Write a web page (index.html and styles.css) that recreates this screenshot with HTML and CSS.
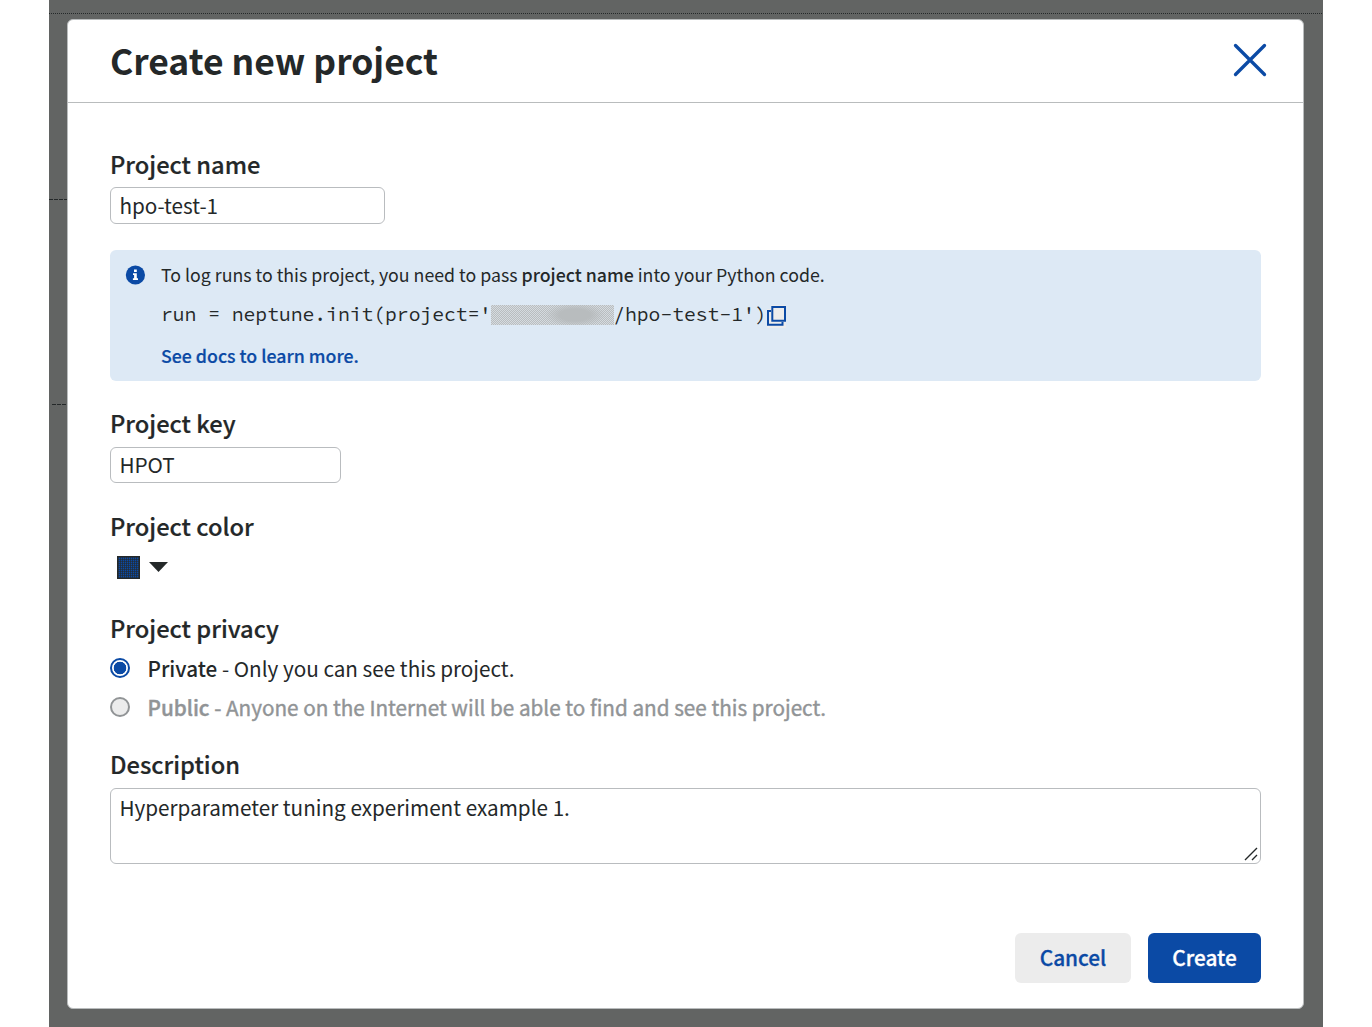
FILE: index.html
```html
<!DOCTYPE html>
<html lang="en">
<head>
<meta charset="utf-8">
<title>Create new project</title>
<link rel="stylesheet" href="styles.css">
</head>
<body>
<div class="backdrop">
  <div class="rule rule-top"></div>
  <div class="rule rule-upper"></div>
  <div class="rule rule-lower"></div>
  <main class="modal">
    <header class="modal-header">
      <h1>Create new project</h1>
      <svg class="close" width="34" height="34" viewBox="0 0 34 34" aria-label="Close"><path d="M2.5 2.5 31.5 31.5M31.5 2.5 2.5 31.5"/></svg>
    </header>
    <form class="modal-body">
      <label class="label" for="name">Project name</label>
      <input class="field field-name" id="name" value="hpo-test-1">

      <section class="info">
        <svg class="info-icon" width="20" height="20" viewBox="0 0 20 20"><circle cx="10.4" cy="10" r="9.6"/><path d="M9 4.5h2.8v2.5H9zM8 8.3h3.8v5H13v1.8H7.9v-1.8h1.2v-3.2H8z"/></svg>
        <div class="info-text">
          <p>To log runs to this project, you need to pass <b>project name</b> into your Python code.</p>
          <div class="code"><code>run = neptune.init(project='</code><span class="redacted"></span><code class="code-tail">/hpo-test-1')</code><svg class="copy" width="20" height="24" viewBox="0 0 20 24"><path class="copy-bg" d="M0 4h4V0h15v23H0z"/><path d="M5.3 2h12.7v13.7H5.3zM4 6H1v13.7h14.5V17"/></svg></div>
          <a class="docs">See docs to learn more.</a>
        </div>
      </section>

      <label class="label" for="key">Project key</label>
      <input class="field field-key" id="key" value="HPOT">

      <div class="label label-color">Project color</div>
      <div class="color-picker">
        <span class="swatch"></span>
        <svg width="19" height="10" viewBox="0 0 19 10"><path d="M0 0h19L9.5 10z"/></svg>
      </div>

      <div class="label label-privacy">Project privacy</div>
      <div class="option"><span class="radio radio-on"></span><p><b>Private</b> - Only you can see this project.</p></div>
      <div class="option option-off"><span class="radio"></span><p><b>Public</b> - Anyone on the Internet will be able to find and see this project.</p></div>

      <label class="label label-desc" for="desc">Description</label>
      <div class="desc-box">
        <textarea class="field field-desc" id="desc">Hyperparameter tuning experiment example 1.</textarea>
        <svg class="grip" width="14" height="14" viewBox="0 0 14 14"><path d="M1 13 13 1M8 13l5-5"/></svg>
      </div>

      <div class="actions">
        <button class="button button-plain" type="button">Cancel</button>
        <button class="button button-primary" type="button">Create</button>
      </div>
    </form>
  </main>
</div>
</body>
</html>
```
FILE: styles.css
```css
* { box-sizing: border-box; }
body {
  margin: 0;
  height: 1027px;
  overflow: hidden;
  background: #fff;
  color: #242829;
  font: 20.7px/30px "Noto Sans CJK SC", "Noto Sans", sans-serif;
}
h1, p { margin: 0; }
b { font-weight: 500; }

.backdrop {
  position: relative;
  height: 1027px;
  margin: 0 49px;
  padding: 19px 19px 18px 18px;
  background: #626463;
}
.rule { position: absolute; left: 0; height: 1px; }
.rule-top { top: 13px; right: 0; background: repeating-linear-gradient(90deg, #242829 0 1px, transparent 1px 2px); }
.rule-upper, .rule-lower { width: 18px; background: repeating-linear-gradient(90deg, #242829 0 4px, transparent 4px 5px); }
.rule-upper { top: 199px; }
.rule-lower { top: 404px; left: 3px; width: 14px; }

.modal {
  position: relative;
  height: 990px;
  border: 1px solid #b9bcbd;
  border-radius: 6px;
  background: #fff;
}
.modal-header {
  display: flex;
  align-items: center;
  justify-content: space-between;
  height: 83px;
  padding: 0 36px 2px 42px;
  border-bottom: 1px solid #b9bcbd;
}
h1 { font-size: 35.45px; font-weight: 700; line-height: 50px; }
.close { fill: none; stroke: #0b4aa5; stroke-width: 3.3; stroke-linecap: round; }

.modal-body {
  display: flex;
  flex-direction: column;
  padding: 46px 42px 0;
}
.label { font-size: 23.7px; font-weight: 500; -webkit-text-stroke: .2px #242829; }
.field {
  border: 1px solid #b9bcbf;
  border-radius: 6px;
  padding: 0 8.4px 1px;
  background: #fff;
  color: inherit;
  font: inherit;
  outline: none;
}
.field-name { width: 275px; height: 37px; margin-top: 8px; }
.field-key { width: 231px; height: 36px; margin-top: 9px; padding-bottom: 2px; }

.info {
  display: flex;
  gap: 16px;
  height: 131px;
  margin: 26px 0 27px;
  padding: 12px 15px;
  border-radius: 6px;
  background: #dde9f5;
  font-size: 17.74px;
  line-height: 24px;
}
.info-icon { margin-top: 3px; fill: #0b4aa5; }
.info-icon path { fill: #fff; }
.code { display: flex; align-items: center; height: 24px; margin: 16px 0 17px; }
code { font: 19.67px/24px "Source Code Pro", "Liberation Mono", monospace; white-space: pre; }
.code-tail { margin-left: -1px; }
.redacted {
  width: 123px;
  height: 20px;
  margin-top: 2px;
  background:
    radial-gradient(ellipse 30px 12px at 84px 10px, #b8bcbe 50%, transparent 100%),
    repeating-conic-gradient(#b9bdbf 0 25%, #d5dbe0 0 50%) 0 0 / 2px 2px;
}
.copy { margin-top: 6px; fill: none; stroke: #0b4aa5; stroke-width: 2; }
.copy .copy-bg { fill: #ececec; stroke: none; }
.docs { display: block; color: #0b4aa5; font-weight: 500; -webkit-text-stroke: .2px #0b4aa5; }

.label-color { margin-top: 28px; }
.color-picker { display: flex; align-items: center; gap: 9px; height: 23px; margin: 15px 0 0 7px; fill: #242829; }
.color-picker svg { margin-bottom: 2px; }
.swatch {
  width: 23px;
  height: 23px;
  border: 1px solid #242829;
  background:
    repeating-linear-gradient(0deg, rgba(36, 40, 41, .55) 0 1px, transparent 1px 2px),
    repeating-linear-gradient(90deg, rgba(36, 40, 41, .65) 0 1px, transparent 1px 2px),
    #0b4aa5;
}
.label-privacy { margin: 34px 0 6px; }
.option { display: flex; align-items: center; gap: 17.5px; height: 39px; }
.option p { margin-bottom: 2px; }
.option-off { color: #919496; -webkit-text-stroke: .4px #919496; }
.radio {
  width: 20px;
  height: 20px;
  margin-bottom: 1px;
  border: 2px solid #919496;
  border-radius: 50%;
  background: #ececec;
}
.radio-on { border: 2px solid #0b4aa5; background: radial-gradient(circle, #0b4aa5 6px, #fff 6.6px); }

.label-desc { margin-top: 22px; }
.desc-box { position: relative; display: flex; height: 76px; margin-top: 9px; }
.field-desc { flex: 1; padding: 3px 8.4px; resize: none; overflow: hidden; }
.grip { position: absolute; right: 3px; bottom: 3px; fill: none; stroke: #242829; stroke-width: 1.4; }

.actions { display: flex; justify-content: flex-end; gap: 17px; margin-top: 69px; }
.button {
  height: 50px;
  padding: 0 0 2px;
  border: 0;
  border-radius: 6px;
  font: 500 20.8px/30px "Noto Sans CJK SC", "Noto Sans", sans-serif;
  -webkit-text-stroke: .3px currentColor;
}
.button-plain { width: 116px; background: #ececec; color: #0b4aa5; }
.button-primary { width: 113px; background: #0b4aa5; color: #fff; }
```
